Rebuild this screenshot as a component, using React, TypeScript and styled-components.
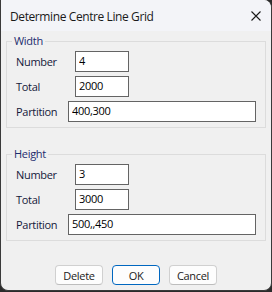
import React from "react";
import styled, { createGlobalStyle } from "styled-components";

const GlobalStyle = createGlobalStyle`
  html, body {
    margin: 0;
    padding: 0;
    background: #2b2b2b;
  }
  body {
    font-family: "Open Sans", "Noto Sans", sans-serif;
    font-size: 11px;
    letter-spacing: -0.3px;
  }
`;

type Field = { label: string; value: string; wide?: boolean };

const groups: { title: string; fields: Field[] }[] = [
  {
    title: "Width",
    fields: [
      { label: "Number", value: "4" },
      { label: "Total", value: "2000" },
      { label: "Partition", value: "400,300", wide: true },
    ],
  },
  {
    title: "Height",
    fields: [
      { label: "Number", value: "3" },
      { label: "Total", value: "3000" },
      { label: "Partition", value: "500,,450", wide: true },
    ],
  },
];

const App = () => {
  return (
    <>
      <GlobalStyle />
      <Window>
        <TitleBar>
          <Title>Determine Centre Line Grid</Title>
          <CloseButton aria-label="Close">
            <svg width="10" height="10" viewBox="0 0 10 10">
              <path d="M0.5 0.5 L9.5 9.5 M9.5 0.5 L0.5 9.5" stroke="#1a1a1a" strokeWidth="1.1" />
            </svg>
          </CloseButton>
        </TitleBar>
        <Body>
          {groups.map(({ title, fields }, i) => (
            <Group key={title} $first={i === 0}>
              <Legend>{title}</Legend>
              <Fields>
                {fields.map(({ label, value, wide }) => (
                  <Row key={label}>
                    <Label $width={wide ? 52 : 59}>{label}</Label>
                    <TextBox defaultValue={value} $wide={wide} />
                  </Row>
                ))}
              </Fields>
            </Group>
          ))}
          <ButtonBar>
            <Button>Delete</Button>
            <Button $primary>OK</Button>
            <Button>Cancel</Button>
          </ButtonBar>
        </Body>
      </Window>
    </>
  );
};

export default App;

const Window = styled.div`
  width: 272px;
  height: 291px;
  box-sizing: border-box;
  display: flex;
  flex-direction: column;
  border: 1px solid #3a3a3a;
  border-top: none;
  border-radius: 0 8px 8px 8px;
  overflow: hidden;
  background: #f0f0f0;
`;

const TitleBar = styled.div`
  height: 31px;
  flex: none;
  display: flex;
  align-items: center;
  justify-content: space-between;
  padding: 0 10px 0 9px;
  background: #f3f4f8;
`;

const Title = styled.span`
  color: #1a1a1a;
  font-size: 12px;
  letter-spacing: -0.4px;
  padding-top: 1px;
`;

const CloseButton = styled.div`
  width: 10px;
  height: 10px;
  display: flex;
  svg {
    display: block;
  }
`;

const Body = styled.div`
  flex: 1;
  display: flex;
  flex-direction: column;
  padding: 3px 5px 0;
`;

const Group = styled.fieldset<{ $first?: boolean }>`
  margin: ${(p) => (p.$first ? "0" : "19px 0 0")};
  padding: 0;
  min-width: 0;
  border: 1px solid #dcdcdc;
`;

const Legend = styled.legend`
  margin-left: 5px;
  padding: 0 2px;
  line-height: 14px;
  color: #1c2c6e;
`;

const Fields = styled.div`
  display: flex;
  flex-direction: column;
  gap: 4px;
  padding: 3px 9px 5px 9px;
`;

const Row = styled.div`
  display: flex;
  align-items: center;
`;

const Label = styled.span<{ $width: number }>`
  width: ${(p) => p.$width}px;
  flex: none;
  color: #14183a;
`;

const TextBox = styled.input<{ $wide?: boolean }>`
  box-sizing: border-box;
  width: ${(p) => (p.$wide ? "auto" : "54px")};
  flex: ${(p) => (p.$wide ? "1" : "none")};
  min-width: 0;
  height: 21px;
  margin: 0;
  padding: 1px 3px 4px;
  line-height: 14px;
  border: 1px solid #646464;
  border-radius: 0;
  background: #fff;
  color: #000;
  font-family: inherit;
  font-size: 11px;
  letter-spacing: inherit;
  outline: none;
`;

const ButtonBar = styled.div`
  margin-top: auto;
  display: flex;
  justify-content: center;
  gap: 9px;
  padding-bottom: 5px;
`;

const Button = styled.button<{ $primary?: boolean }>`
  width: 48px;
  height: 20px;
  padding: 0;
  box-sizing: border-box;
  font-family: inherit;
  font-size: 11px;
  letter-spacing: inherit;
  color: #1a1a1a;
  background: #fdfdfd;
  border: 1px solid ${(p) => (p.$primary ? "#0067c0" : "#d0d0d0")};
  border-bottom-color: ${(p) => (p.$primary ? "#0067c0" : "#bdbdbd")};
  border-radius: 4px;
`;
